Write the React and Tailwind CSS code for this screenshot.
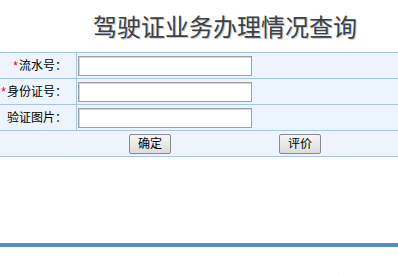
import React from "react";

const font = { fontFamily: '"Liberation Sans", "Noto Sans CJK SC", sans-serif' };

function Field({ label, required }) {
    return (
        <div className="flex h-[26px] border-t border-[#a4c6ea] bg-[#edf4fd]">
            <div className="w-[77px] border-r border-[#a4c6ea] flex items-center justify-end pr-[9px] text-[12px] text-black">
                {required && <span className="text-[#e00000] mr-[1px]">*</span>}
                {label}：
            </div>
            <div className="flex items-center pl-[1px]">
                <input
                    type="text"
                    className="w-[174px] h-[20px] bg-white border border-[#a0a0a0] shadow-[inset_1px_1px_0_#d4d4d4] outline-none"
                />
            </div>
        </div>
    );
}

function Btn({ children }) {
    return (
        <button className="w-[42px] h-[20px] text-[12px] leading-none text-black border border-[#8a8a8a] rounded-[2px] bg-gradient-to-b from-[#f6f6f6] to-[#dcdcdc]">
            {children}
        </button>
    );
}

export default function App() {
    return (
        <div className="w-[398px] h-[275px] overflow-hidden bg-white" style={font}>
            {/* Title */}
            <div className="h-[52px] pt-[13px] pl-[52px] text-center">
                <h1 className="text-[24px] leading-[30px] text-[#404040] font-normal [text-shadow:1px_1px_0_#c3ccd8]">
                    驾驶证业务办理情况查询
                </h1>
            </div>

            {/* Form table */}
            <div className="border-b border-[#a4c6ea]">
                <Field label="流水号" required />
                <Field label="身份证号" required />
                <Field label="验证图片" />
                <div className="flex items-center h-[26px] border-t border-[#a4c6ea] bg-[#edf4fd] pl-[129px] gap-[108px]">
                    <Btn>确定</Btn>
                    <Btn>评价</Btn>
                </div>
            </div>

            {/* Divider */}
            <div className="mt-[86px] h-[4px] bg-[#4f8fc6]" />

            {/* Notes */}
            <p className="mt-[27px] pl-[22px] text-[12px] leading-[16px] text-black whitespace-nowrap">
                温馨提示：请在上方输入业务流水号和身份证号码后点击确定进行查询。
            </p>
        </div>
    );
}
